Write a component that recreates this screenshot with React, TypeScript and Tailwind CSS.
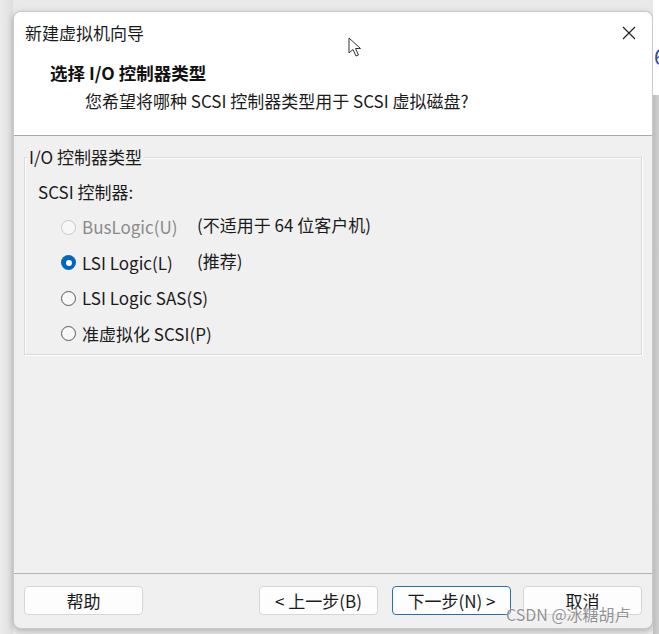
import React from "react";

const font = { fontFamily: '"Noto Sans CJK SC", "Noto Sans", sans-serif' };

type Opt = { label: string; note?: string; checked?: boolean; disabled?: boolean };

const options: Opt[] = [
  { label: "BusLogic(U)", note: "(不适用于 64 位客户机)", disabled: true },
  { label: "LSI Logic(L)", note: "(推荐)", checked: true },
  { label: "LSI Logic SAS(S)" },
  { label: "准虚拟化 SCSI(P)" },
];

function Radio({ checked, disabled }: { checked?: boolean; disabled?: boolean }) {
  if (checked) {
    return (
      <span className="flex h-[15px] w-[15px] shrink-0 items-center justify-center rounded-full bg-[#0067c0]">
        <span className="h-[6px] w-[6px] rounded-full bg-white" />
      </span>
    );
  }
  return (
    <span
      className={
        "h-[15px] w-[15px] shrink-0 rounded-full border bg-[#f7f7f7] " +
        (disabled ? "border-[#c8c8c8]" : "border-[#5a5a5a]")
      }
    />
  );
}

function Button({ children, focused }: { children: React.ReactNode; focused?: boolean }) {
  return (
    <div
      className={
        "flex h-[29px] w-[119px] items-center justify-center whitespace-nowrap rounded-[4px] bg-[#fdfdfd] text-[17px] text-[#1a1a1a] " +
        (focused ? "border border-[#2a6fb0] shadow-[inset_0_0_0_1px_#ffffff]" : "border border-[#d6d6d6]")
      }
    >
      {children}
    </div>
  );
}

export default function App() {
  return (
    <div className="relative flex h-[634px] w-[659px] overflow-hidden bg-[#e9e9e9]" style={font}>
      {/* background left of the window */}
      <div className="w-[13px] shrink-0 bg-gradient-to-r from-[#ececec] to-[#dedede]" />

      {/* dialog window */}
      <div className="mt-[11px] flex h-[618px] w-[640px] shrink-0 flex-col overflow-hidden rounded-[8px] border border-[#c9c9c9] bg-[#f0f0f0] shadow-[0_2px_6px_rgba(0,0,0,0.25)]">
        <div className="h-[123px] shrink-0 bg-white">
          <div className="flex h-[41px] items-center justify-between pl-[11px] pr-[14px]">
            <span className="text-[17px] text-[#1b1b1b]">新建虚拟机向导</span>
            <svg width="14" height="14" viewBox="0 0 14 14" className="mr-[2px]">
              <path d="M1 1 L13 13 M13 1 L1 13" stroke="#222" strokeWidth="1.2" />
            </svg>
          </div>
          <div className="pl-[36px] pt-[8px] text-[17.5px] font-bold leading-[24px] text-[#111]">
            选择 I/O 控制器类型
          </div>
          <div className="pl-[71px] pt-[4px] text-[17px] leading-[24px] text-[#1b1b1b]">
            您希望将哪种 SCSI 控制器类型用于 SCSI 虚拟磁盘?
          </div>
        </div>
        <div className="h-px shrink-0 bg-[#a9a9a9]" />

        <div className="flex-1 px-[10px] pt-[21px]">
          <div className="relative h-[198px] border border-[#dadada] shadow-[inset_1px_1px_0_#ffffff,1px_1px_0_#ffffff]">
            <span className="absolute -top-[13px] left-[2px] whitespace-nowrap bg-[#f0f0f0] px-[2px] text-[17px] leading-[24px] text-[#1b1b1b]">
              I/O 控制器类型
            </span>
            <div className="pl-[13px] pt-[22px] text-[17px] leading-[24px] text-[#1b1b1b]">SCSI 控制器:</div>
            <div className="mt-[11px] flex flex-col gap-[11.5px] pl-[36px]">
              {options.map((o) => (
                <div key={o.label} className="flex h-[24px] items-center whitespace-nowrap text-[17px] leading-[24px]">
                  <Radio checked={o.checked} disabled={o.disabled} />
                  <span className={"ml-[6px] w-[115px] shrink-0 " + (o.disabled ? "text-[#8a8a8a]" : "text-[#1b1b1b]")}>
                    {o.label}
                  </span>
                  {o.note && <span className="-mt-[4px] text-[#1b1b1b]">{o.note}</span>}
                </div>
              ))}
            </div>
          </div>
        </div>

        <div className="h-px shrink-0 bg-[#b4b4b4]" />
        <div className="flex h-[54px] shrink-0 items-start px-[10px] pt-[12px]">
          <Button>帮助</Button>
          <div className="ml-auto flex gap-[12px]">
            <div className="flex gap-[14px]">
              <Button>&lt; 上一步(B)</Button>
              <Button focused>下一步(N) &gt;</Button>
            </div>
            <Button>取消</Button>
          </div>
        </div>
      </div>

      {/* area right of the window */}
      <div className="flex w-[6px] shrink-0 flex-col">
        <div className="h-[95px] overflow-hidden bg-white">
          <span className="ml-[1px] mt-[42px] block text-[22px] leading-[26px] text-[#3a4aa8]">6</span>
        </div>
        <div className="flex-1 bg-gradient-to-r from-[#bdbdbd] to-[#d0d0d0]" />
      </div>

      {/* mouse cursor */}
      <svg className="absolute left-[348px] top-[37px]" width="16" height="22" viewBox="0 0 16 22">
        <path d="M1 1 L1 16 L5 12.5 L8 19 L10.5 18 L7.5 11.5 L12.5 11.5 Z" fill="#fff" stroke="#333" strokeWidth="1" />
      </svg>

      {/* watermark */}
      <span
        className="absolute left-[506px] top-[602px] whitespace-nowrap text-[16px] leading-[24px] text-[rgba(110,110,110,0.75)]"
        style={{ textShadow: "0 0 2px #fff" }}
      >
        CSDN @冰糖胡卢
      </span>
    </div>
  );
}
